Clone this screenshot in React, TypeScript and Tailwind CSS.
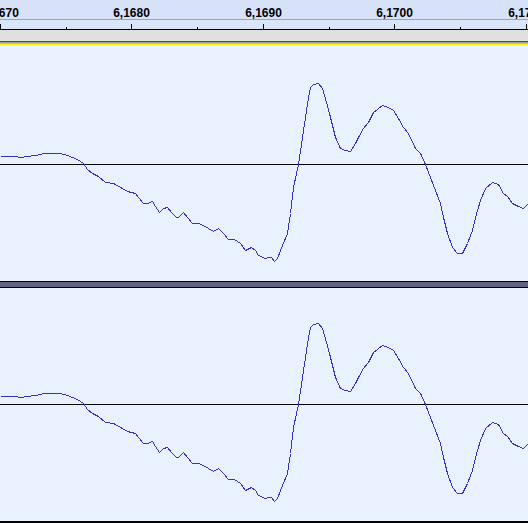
const points: [number, number][] = [
  [0, 156], [12, 156], [22, 157], [25, 156], [36, 155], [43, 153], [60, 153], [67, 155],
  [77, 159], [83, 163], [87, 169], [92, 173], [98, 176], [105, 182], [113, 183], [120, 187],
  [127, 191], [135, 193], [138, 197], [143, 203], [147, 203], [152, 201], [155, 206], [159, 212],
  [163, 208], [167, 207], [171, 212], [176, 217], [178, 217], [183, 212], [187, 217], [192, 223],
  [198, 223], [203, 225], [208, 228], [213, 231], [218, 228], [223, 233], [228, 239], [234, 239],
  [240, 243], [245, 250], [251, 247], [255, 250], [258, 255], [265, 258], [268, 257], [271, 257],
  [274, 261], [277, 258], [280, 250], [287, 233], [290, 213], [293, 187], [298, 164], [302, 137],
  [305, 117], [308, 97], [310, 87], [313, 84], [318, 83], [322, 88], [326, 102], [329, 113],
  [332, 125], [335, 137], [340, 148], [345, 150], [350, 151], [355, 143], [358, 137], [363, 128],
  [368, 122], [373, 112], [382, 105], [388, 107], [393, 110], [398, 118], [403, 127], [408, 133],
  [415, 148], [420, 153], [425, 164], [430, 177], [435, 190], [440, 203], [443, 217], [447, 233],
  [452, 247], [457, 253], [462, 253], [467, 243], [472, 230], [475, 217], [480, 200], [485, 188],
  [492, 182], [498, 184], [503, 193], [507, 196], [512, 203], [518, 206], [523, 208], [528, 203],
]

const wavePath = points.map(([x, y], i) => `${i ? "L" : "M"}${x + 0.5} ${y + 0.5}`).join(" ")

const majorTicks = [
  { x: 0, label: "6,1670" },
  { x: 131, label: "6,1680" },
  { x: 263, label: "6,1690" },
  { x: 394, label: "6,1700" },
  { x: 526, label: "6,1710" },
]
const minorTicks = [66, 197, 329, 460]

function Ruler() {
  return (
    <div className="flex flex-col">
      <div className="relative h-[19px] bg-[#d7e2f9]">
        {majorTicks.map((t) => (
          <span
            key={t.label}
            className="absolute top-[6px] -translate-x-1/2 text-[12px] font-bold leading-[14px] text-black"
            style={{ left: t.x + 0.5 }}
          >
            {t.label}
          </span>
        ))}
      </div>
      <div className="h-px bg-[#9ea6b4]" />
      <div className="relative h-[9px] bg-[#dbe5fa]">
        {majorTicks.map((t) => (
          <div key={t.label} className="absolute bottom-0 h-[5px] w-px bg-black" style={{ left: t.x }} />
        ))}
        {minorTicks.map((x) => (
          <div key={x} className="absolute bottom-0 h-[2px] w-px bg-black" style={{ left: x }} />
        ))}
      </div>
      <div className="h-px bg-black" />
      <div className="h-[11px] bg-[#e0e0e0]" />
      <div className="h-px bg-[#4c4c4c]" />
      <div className="h-px bg-[#9c9c9c]" />
      <div className="h-px bg-[#c8c478]" />
      <div className="h-px bg-[#f4f000]" />
    </div>
  )
}

function Track({ top, height, center, shift }: { top: number; height: number; center: number; shift: number }) {
  return (
    <div className="bg-[#e9f1fe]" style={{ height }}>
      <svg width={528} height={height} viewBox={`0 ${top} 528 ${height}`} className="block">
        <line x1={0} x2={528} y1={center + 0.5} y2={center + 0.5} stroke="#000" strokeWidth={1} shapeRendering="crispEdges" />
        <path
          d={wavePath}
          transform={`translate(0 ${shift})`}
          fill="none"
          stroke="#3232c8"
          strokeWidth={1}
          strokeLinejoin="round"
          shapeRendering="crispEdges"
        />
      </svg>
    </div>
  )
}

export default function App() {
  return (
    <div className="flex h-[523px] w-[528px] flex-col overflow-hidden bg-[#e9f1fe] font-['Liberation_Sans',Arial,sans-serif]">
      <Ruler />
      <Track top={45} height={236} center={164} shift={0} />
      <div className="h-px bg-black" />
      <div className="h-[5px] bg-[#5f6486]" />
      <div className="h-px bg-black" />
      <Track top={288} height={233} center={404} shift={240} />
      <div className="h-[2px] bg-black" />
    </div>
  )
}
